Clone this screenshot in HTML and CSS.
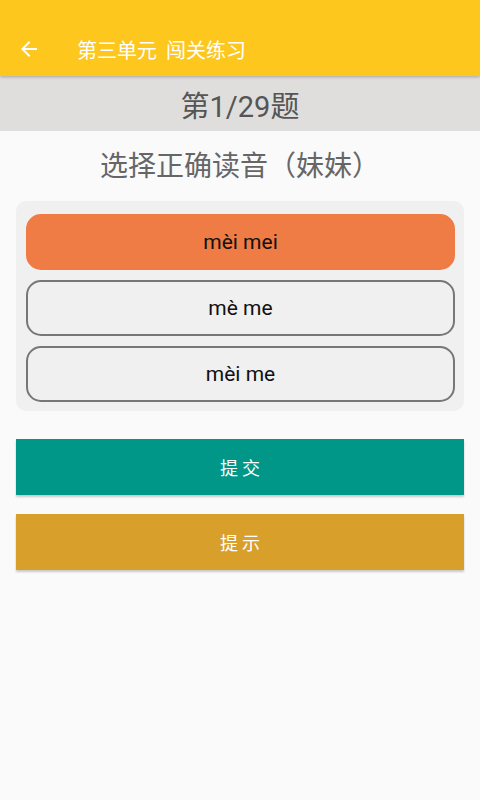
FILE: index.html
```html
<!DOCTYPE html>
<html lang="zh">
<head>
<meta charset="utf-8">
<link rel="stylesheet" href="styles.css">
</head>
<body>
<div class="app">
  <header class="topbar">
    <svg class="back" viewBox="0 0 24 24" width="24" height="24"><path d="M20 11H7.83l5.59-5.59L12 4l-8 8 8 8 1.41-1.41L7.83 13H20v-2z" fill="#fff"/></svg>
    <h1 class="title">第三单元<span class="gap"></span>闯关练习</h1>
  </header>
  <div class="counter">第1/29题</div>
  <div class="question">选择正确读音（妹妹）</div>
  <div class="card">
    <div class="option selected">mèi mei</div>
    <div class="option">mè me</div>
    <div class="option">mèi me</div>
  </div>
  <div class="btn submit">提交</div>
  <div class="btn hint">提示</div>
</div>
</body>
</html>
```
FILE: styles.css
```css
* { box-sizing: border-box; }
html, body { margin: 0; padding: 0; }
body {
  width: 480px;
  height: 800px;
  background: #fafafa;
  font-family: Roboto, "Noto Sans CJK SC", sans-serif;
  overflow: hidden;
}
.app { display: flex; flex-direction: column; }
.topbar {
  height: 76px;
  padding-top: 22px;
  background: #fdc71e;
  display: flex;
  align-items: center;
  box-shadow: 0 1px 3px rgba(0,0,0,0.25);
  position: relative;
  z-index: 1;
}
.back { margin-left: 17px; width: 24px; height: 24px; }
.title {
  margin: 0 0 0 36px;
  font-size: 20px;
  font-weight: 400;
  color: #fff;
  display: flex;
  align-items: center;
}
.gap { display: inline-block; width: 9px; }
.counter {
  height: 55px;
  background: #dfdedc;
  display: flex;
  align-items: center;
  justify-content: center;
  font-size: 29px;
  color: #555;
  padding-top: 1px;
}
.question {
  height: 70px;
  display: flex;
  align-items: center;
  justify-content: center;
  font-size: 28px;
  color: #666;
  padding-bottom: 4px;
}
.card {
  margin: 0 16px;
  background: #f0f0f0;
  border-radius: 10px;
  padding: 13px 9px 9px 10px;
  display: flex;
  flex-direction: column;
  gap: 10px;
}
.option {
  height: 56px;
  border-radius: 15px;
  border: 2px solid #777;
  display: flex;
  align-items: center;
  justify-content: center;
  font-size: 21px;
  color: #111;
}
.option.selected {
  background: #ef7b45;
  border-color: #ef7b45;
}
.btn {
  margin: 0 16px;
  height: 56px;
  display: flex;
  align-items: center;
  justify-content: center;
  color: #fff;
  font-size: 18px;
  letter-spacing: 4px;
  padding-left: 4px;
  box-shadow: 0 2px 2px rgba(0,0,0,0.2);
}
.submit { margin-top: 28px; background: #009688; }
.hint { margin-top: 19px; background: #d99f2b; }
```
